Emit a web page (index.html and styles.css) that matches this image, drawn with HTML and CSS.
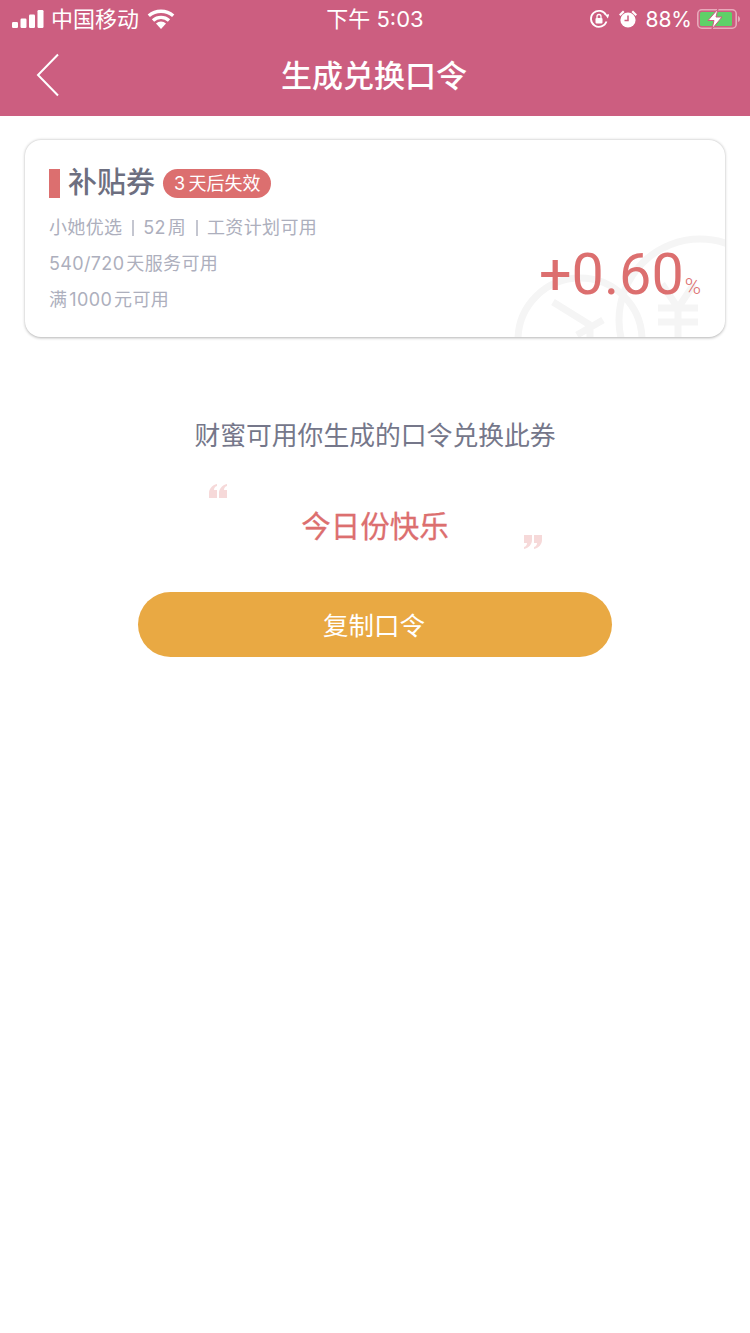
FILE: index.html
```html
<!DOCTYPE html>
<html lang="zh-CN">
<head>
<meta charset="utf-8">
<title>生成兑换口令</title>
<link rel="stylesheet" href="styles.css">
</head>
<body>
<header class="header">
  <div class="status">
    <div class="status-left">
      <svg class="signal" width="32" height="18" viewBox="0 0 32 18"><rect x="0" y="12" width="6" height="6" rx="1.2"/><rect x="8.5" y="8.5" width="6" height="9.5" rx="1.2"/><rect x="17" y="4.5" width="6" height="13.5" rx="1.2"/><rect x="25.500" y="0" width="6" height="18" rx="1.2"/></svg>
      <span class="carrier">中国移动</span>
      <svg class="wifi" width="28" height="20" viewBox="0 0 28 20"><path d="M14 20l-5-5.600a7.500 7.500 0 0 1 10 0z" fill="#fff"/><path d="M6 11.400a12 12 0 0 1 16 0M1.800 6.800a18.500 18.500 0 0 1 24.400 0" fill="none" stroke="#fff" stroke-width="3.400"/></svg>
    </div>
    <div class="status-time">下午 5:03</div>
    <div class="status-right">
      <svg width="20" height="20" viewBox="0 0 20 20"><path d="M17.500 12.500A8 8 0 1 1 17 6" fill="none" stroke="#fff" stroke-width="1.800"/><path d="M18.800 9.500l-2.600-3.800 4-.4z" fill="#fff"/><rect x="6.500" y="9" width="7" height="5.500" rx="1" fill="#fff"/><path d="M8 9V7.500a2 2 0 0 1 4 0V9" fill="none" stroke="#fff" stroke-width="1.300"/></svg>
      <svg class="alarm" width="20" height="20" viewBox="0 0 20 20"><circle cx="10" cy="11" r="7.600" fill="#fff"/><path d="M1 5.500L5 1.500 6.500 3 2.500 7zM19 5.500L15 1.500 13.500 3 17.500 7z" fill="#fff"/><path d="M10 6.500V11.500H6.500" fill="none" stroke="#cc5e80" stroke-width="1.500"/></svg>
      <span class="battery-text">88%</span>
      <svg width="43" height="20" viewBox="0 0 43 20"><rect x=".8" y=".8" width="38.400" height="18.400" rx="4" fill="none" stroke="#e8a9bb" stroke-width="1.600"/><rect x="3" y="3" width="32" height="14" rx="1.500" fill="#5fd068"/><path d="M41 7c1.300.5 2 1.500 2 3s-.7 2.500-2 3z" fill="#e8a9bb"/><path d="M21 0L11 11.500h6L15 20l10-12h-6z" fill="#fff" stroke="#cc5e80" stroke-width="1"/></svg>
    </div>
  </div>
  <nav class="nav">
    <svg class="back" width="24" height="44" viewBox="0 0 24 44"><path d="M22 1.500L2 22l20 20.500" fill="none" stroke="#fff" stroke-width="2"/></svg>
    <h1 class="title">生成兑换口令</h1>
  </nav>
</header>

<main class="main">
  <section class="card">
    <svg class="watermark" width="215" height="105" viewBox="0 0 215 105">
      <g fill="none" stroke="#f5f5f5" stroke-width="7">
        <circle cx="70" cy="108" r="62"/>
        <circle cx="190" cy="88" r="81"/>
        <path d="M43 70l37 23M93 88l-26 15M80 93v12"/>
        <path d="M148 76h40M148 90h40M168 76v29M152 52l16 24 16-24"/>
      </g>
    </svg>
    <div class="card-head">
      <i class="mark"></i>
      <span class="card-name">补贴券</span>
      <span class="badge">3&#8201;天后失效</span>
    </div>
    <p class="line">小她优选 <i class="sep"></i> 52&#8202;周 <i class="sep"></i> 工资计划可用</p>
    <p class="line">540/720&#8202;天服务可用</p>
    <p class="line">满&#8202;1000&#8202;元可用</p>
    <div class="rate"><span class="rate-num">+0.60</span><span class="rate-unit">%</span></div>
  </section>

  <p class="hint">财蜜可用你生成的口令兑换此券</p>

  <div class="code">
    <svg class="quote quote-open" width="18" height="14" viewBox="0 0 18 14"><path d="M8 0C3 1 0 5 0 9v5h8V6H5c0-2 1-3.500 3-4zM18 0c-5 1-8 5-8 9v5h8V6h-3c0-2 1-3.500 3-4z"/></svg>
    <span class="code-text">今日份快乐</span>
    <svg class="quote quote-close" width="18" height="14" viewBox="0 0 18 14"><path d="M10 14c5-1 8-5 8-9V0h-8v8h3c0 2-1 3.500-3 4zM0 14c5-1 8-5 8-9V0H0v8h3c0 2-1 3.500-3 4z"/></svg>
  </div>

  <button class="copy" type="button">复制口令</button>
</main>
</body>
</html>
```
FILE: styles.css
```css
* { box-sizing: border-box; }
html, body { margin: 0; padding: 0; }
body {
  width: 750px;
  min-height: 1333px;
  background: #fff;
  font-family: Inter, "Noto Sans CJK SC", sans-serif;
}
.header { background: #cc5e80; color: #fff; height: 116px; }
.status {
  height: 38px;
  display: grid;
  grid-template-columns: 1fr auto 1fr;
  align-items: center;
  padding: 0 10px 0 12px;
}
.status-left { display: flex; align-items: center; }
.signal { fill: #fff; margin-right: 7px; }
.carrier { font-size: 22px; line-height: 36px; margin-right: 8px; }
.status-time { font-size: 22px; line-height: 36px; margin-right: 2px; }
.status-right { display: flex; align-items: center; justify-content: flex-end; }
.alarm { margin-left: 9px; }
.battery-text { font-size: 21px; margin: 0 5px 0 7px; }
.nav {
  height: 78px;
  padding-bottom: 3px;
  display: flex;
  align-items: center;
  justify-content: center;
  position: relative;
}
.back { position: absolute; left: 36px; top: 15px; }
.title { margin: 0 2px 0 0; font-size: 31px; font-weight: 500; line-height: 73px; }

.main { display: flex; flex-direction: column; align-items: center; padding-top: 24px; }
.card {
  width: 700px;
  height: 197px;
  position: relative;
  overflow: hidden;
  background: #fff;
  border-radius: 16px;
  box-shadow: 0 .5px 3px rgba(0,0,0,.3);
  padding: 28px 24px 0;
}
.card-head { display: flex; align-items: center; height: 30px; }
.mark { width: 11px; height: 29px; background: #dc6f6f; margin-right: 8px; }
.card-name { font-size: 29px; font-weight: 500; color: #6d6f80; line-height: 30px; margin-right: 8px; }
.badge {
  height: 29px;
  line-height: 29px;
  padding: 0 11px;
  border-radius: 15px;
  background: #dc6f6f;
  color: #fff;
  font-size: 18px;
}
.line {
  margin: 0;
  height: 36px;
  line-height: 36px;
  font-size: 18px;
  letter-spacing: .35px;
  color: #adafbd;
  white-space: nowrap;
}
.card-head + .line { margin-top: 12px; }
.sep { display: inline-block; width: 2px; height: 16px; background: #c4c6d0; margin: 0 4px; vertical-align: -2px; }
.watermark { position: absolute; right: 0; bottom: 0; }
.rate { position: absolute; right: 24px; bottom: 18px; color: #dc6f6f; line-height: 64px; font-family: Roboto, sans-serif; display: flex; align-items: baseline; }
.rate-num { font-size: 57.5px; }
.rate-unit { font-size: 22px; margin-left: 1px; font-weight: 300; }

.hint { margin: 80px 0 0; font-size: 25.8px; line-height: 38px; color: #75778a; }
.code { position: relative; width: 334px; margin-top: 29px; height: 108px; text-align: center; }
.code-text { font-size: 29.5px; font-weight: 400; -webkit-text-stroke: .3px #dc6f6f; color: #dc6f6f; line-height: 44px; display: block; padding-top: 20px; }
.quote { position: absolute; fill: #f6d9d9; }
.quote-open { left: 1px; top: 0; }
.quote-close { right: 0; top: 51px; }
.copy {
  width: 474px;
  height: 65px;
  padding: 0 2px 3px 0;
  border: 0;
  border-radius: 33px;
  background: #e9a943;
  color: #fff;
  font-family: inherit;
  font-size: 25.5px;
}
```
